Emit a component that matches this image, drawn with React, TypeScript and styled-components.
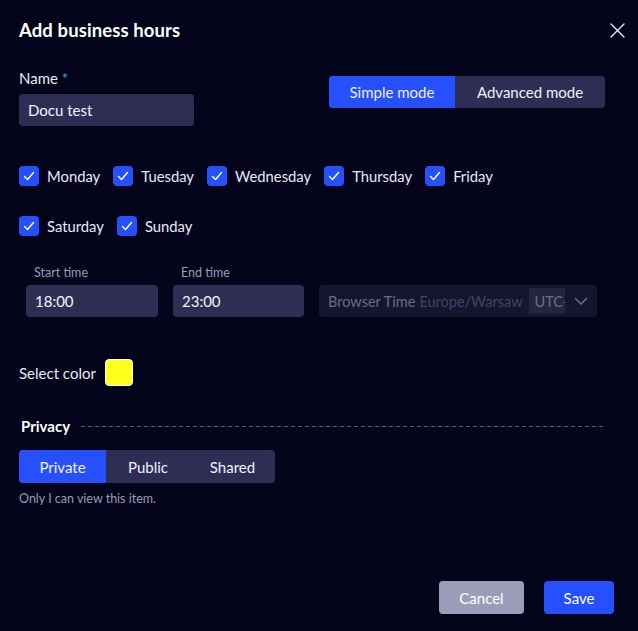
import React from "react";
import styled, { createGlobalStyle } from "styled-components";

const Global = createGlobalStyle`
  html, body { margin: 0; padding: 0; background: #04041b; }
  body { font-family: Lato, "Noto Sans", sans-serif; color: #eceef8; }
  * { box-sizing: border-box; }
`;

const BLUE = "#2650fe";
const FIELD = "#2e2e55";

const Dialog = styled.div`
  width: 638px;
  height: 631px;
  background: #04041b;
  padding: 19px 24px 17px 19px;
  display: flex;
  flex-direction: column;
  position: relative;
`;

const Header = styled.div`
  display: flex;
  justify-content: space-between;
  align-items: center;
  height: 22px;
`;

const Title = styled.h1`
  margin: 0;
  font-size: 18.5px;
  font-weight: 700;
  color: #ffffff;
  letter-spacing: 0.1px;
`;

const CloseBtn = styled.button`
  background: none;
  border: none;
  padding: 0;
  margin-right: -11px;
  width: 16px;
  height: 16px;
  display: flex;
  align-items: center;
  justify-content: center;
  cursor: pointer;
`;

const TopRow = styled.div`
  display: flex;
  justify-content: space-between;
  margin-top: 27px;
  padding-right: 9px;
`;

const Field = styled.div`
  display: flex;
  flex-direction: column;
`;

const Label = styled.label`
  font-size: 15px;
  line-height: 20px;
  color: #e6e8f4;
  margin-bottom: 6px;
`;

const Required = styled.span`
  color: #3aa4e6;
`;

const TextInput = styled.div<{ $w: number }>`
  width: ${(p) => p.$w}px;
  height: 32px;
  background: ${FIELD};
  border-radius: 4px;
  padding: 0 9px;
  display: flex;
  align-items: center;
  font-size: 15px;
  color: #f2f3fa;
`;

const Segmented = styled.div`
  display: flex;
  background: ${FIELD};
  border-radius: 4px;
  overflow: hidden;
  align-self: flex-start;
  margin-top: 8px;
`;

const Segment = styled.button<{ $active?: boolean; $w: number; $h: number }>`
  width: ${(p) => p.$w}px;
  height: ${(p) => p.$h}px;
  border: none;
  background: ${(p) => (p.$active ? BLUE : "transparent")};
  color: #eef0fa;
  font-family: inherit;
  font-size: 15px;
  padding: 0;
  cursor: pointer;
`;

const DaysRow = styled.div<{ $mt: number }>`
  display: flex;
  gap: 13px;
  margin-top: ${(p) => p.$mt}px;
`;

const Day = styled.label`
  display: flex;
  align-items: center;
  gap: 8px;
  font-size: 14.8px;
  color: #e8eaf6;
  height: 20px;
`;

const Box = styled.span`
  width: 20px;
  height: 20px;
  background: ${BLUE};
  border-radius: 4px;
  display: flex;
  align-items: center;
  justify-content: center;
`;

const TimeRow = styled.div`
  display: flex;
  align-items: flex-end;
  gap: 15px;
  margin-top: 29px;
  padding-left: 7px;
`;

const SmallLabel = styled.span`
  font-size: 12.5px;
  line-height: 16px;
  color: #9a9bb4;
  padding-left: 8px;
  margin-bottom: 4px;
`;

const ZoneBox = styled.div`
  width: 278px;
  height: 32px;
  background: #15152f;
  border-radius: 4px;
  display: flex;
  align-items: center;
  padding: 0 9px;
  font-size: 14.5px;
  white-space: nowrap;
`;

const ZoneMain = styled.span`
  color: #6b6b8a;
`;

const ZoneSub = styled.span`
  color: #43436a;
  margin-left: 4px;
`;

const UtcChip = styled.span`
  background: #24243e;
  color: #6e6e8c;
  width: 36px;
  height: 26px;
  margin-left: 6px;
  padding-left: 6px;
  display: flex;
  align-items: center;
  overflow: hidden;
  flex-shrink: 0;
`;

const Chevron = styled.span`
  margin-left: 9px;
  display: flex;
  align-items: center;
`;

const ColorRow = styled.div`
  display: flex;
  align-items: center;
  gap: 9px;
  margin-top: 42px;
  font-size: 15px;
  color: #e8eaf6;
`;

const Swatch = styled.span<{ $c: string }>`
  width: 28px;
  height: 27px;
  background: ${(p) => p.$c};
  border: 1px solid #ffffff;
  border-radius: 4px;
`;

const SectionHead = styled.div`
  display: flex;
  align-items: center;
  gap: 11px;
  margin-top: 31px;
  padding-left: 2px;
  padding-right: 11px;
`;

const SectionTitle = styled.span`
  font-size: 15px;
  font-weight: 700;
  color: #ffffff;
`;

const Dashes = styled.span`
  flex: 1;
  height: 1px;
  background: repeating-linear-gradient(to right, #5c5c7c 0 4px, transparent 4px 7px);
`;

const PrivacyTabs = styled(Segmented)`
  margin-top: 15px;
`;

const Help = styled.p`
  margin: 8px 0 0;
  font-size: 12.5px;
  color: #9a9bb4;
`;

const Footer = styled.div`
  margin-top: auto;
  display: flex;
  justify-content: flex-end;
  gap: 20px;
`;

const Btn = styled.button<{ $primary?: boolean; $w: number }>`
  width: ${(p) => p.$w}px;
  height: 33px;
  border: none;
  border-radius: 4px;
  background: ${(p) => (p.$primary ? BLUE : "#9b9db8")};
  color: #ffffff;
  font-family: inherit;
  font-size: 15px;
  cursor: pointer;
`;

const Check = () => (
  <svg width="14" height="14" viewBox="0 0 14 14" fill="none">
    <path d="M2.5 7.5 L5.5 10.5 L11.5 3.5" stroke="#fff" strokeWidth="1.4" strokeLinecap="round" strokeLinejoin="round" />
  </svg>
);

const days1 = ["Monday", "Tuesday", "Wednesday", "Thursday", "Friday"];
const days2 = ["Saturday", "Sunday"];

export default function App() {
  return (
    <>
      <Global />
      <Dialog>
        <Header>
          <Title>Add business hours</Title>
          <CloseBtn aria-label="Close">
            <svg width="15" height="15" viewBox="0 0 15 15">
              <path d="M1 1 L14 14 M14 1 L1 14" stroke="#e8e8f2" strokeWidth="1.4" strokeLinecap="round" />
            </svg>
          </CloseBtn>
        </Header>

        <TopRow>
          <Field>
            <Label>
              Name <Required>*</Required>
            </Label>
            <TextInput $w={175}>Docu test</TextInput>
          </Field>
          <Segmented>
            <Segment $active $w={126} $h={32}>Simple mode</Segment>
            <Segment $w={150} $h={32}>Advanced mode</Segment>
          </Segmented>
        </TopRow>

        <DaysRow $mt={40}>
          {days1.map((d) => (
            <Day key={d}>
              <Box><Check /></Box>
              {d}
            </Day>
          ))}
        </DaysRow>
        <DaysRow $mt={30}>
          {days2.map((d) => (
            <Day key={d}>
              <Box><Check /></Box>
              {d}
            </Day>
          ))}
        </DaysRow>

        <TimeRow>
          <Field>
            <SmallLabel>Start time</SmallLabel>
            <TextInput $w={132}>18:00</TextInput>
          </Field>
          <Field>
            <SmallLabel>End time</SmallLabel>
            <TextInput $w={131}>23:00</TextInput>
          </Field>
          <ZoneBox>
            <ZoneMain>Browser Time</ZoneMain>
            <ZoneSub>Europe/Warsaw</ZoneSub>
            <UtcChip>UTC+</UtcChip>
            <Chevron>
              <svg width="14" height="9" viewBox="0 0 14 9" fill="none">
                <path d="M1.5 1.5 L7 7 L12.5 1.5" stroke="#6e6e8c" strokeWidth="1.5" strokeLinecap="round" strokeLinejoin="round" />
              </svg>
            </Chevron>
          </ZoneBox>
        </TimeRow>

        <ColorRow>
          Select color
          <Swatch $c="#ffff1c" />
        </ColorRow>

        <SectionHead>
          <SectionTitle>Privacy</SectionTitle>
          <Dashes />
        </SectionHead>

        <PrivacyTabs>
          <Segment $active $w={87} $h={33}>Private</Segment>
          <Segment $w={84} $h={33}>Public</Segment>
          <Segment $w={85} $h={33}>Shared</Segment>
        </PrivacyTabs>
        <Help>Only I can view this item.</Help>

        <Footer>
          <Btn $w={85}>Cancel</Btn>
          <Btn $primary $w={70}>Save</Btn>
        </Footer>
      </Dialog>
    </>
  );
}
